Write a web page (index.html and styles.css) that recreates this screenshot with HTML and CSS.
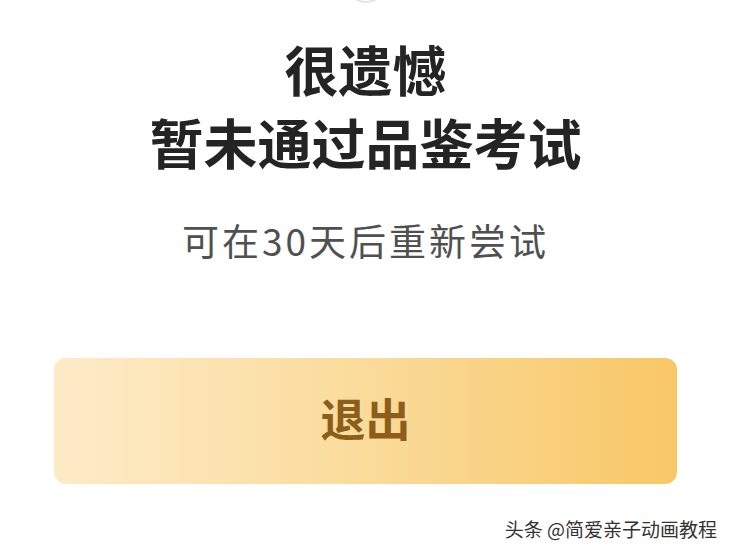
FILE: index.html
```html
<!DOCTYPE html>
<html lang="zh-CN">
<head>
  <meta charset="UTF-8" />
  <meta name="viewport" content="width=device-width, initial-scale=1.0" />
  <title>品鉴考试结果</title>
  <link rel="stylesheet" href="styles.css">
</head>
<body>
  <div class="result">
    <div class="result-icon"></div>

    <h1 class="result-title">
      <span>很遗憾</span>
      <span>暂未通过品鉴考试</span>
    </h1>

    <p class="result-tip">可在30天后重新尝试</p>

    <button class="exit-btn">退出</button>
  </div>

  <div class="watermark">头条 @简爱亲子动画教程</div>
</body>
</html>
```

FILE: styles.css
```css
* {
  box-sizing: border-box;
  margin: 0;
  padding: 0;
}
body {
  font-family: 'Noto Sans CJK SC', 'Noto Sans', sans-serif;
  background: #fff;
  color: #222;
  width: 731px;
  height: 556px;
  overflow: hidden;
  position: relative;
}
.result {
  display: flex;
  flex-direction: column;
  align-items: center;
  padding: 0 54px;
}
/* bottom edge of the status icon, scrolled off the top */
.result-icon {
  width: 44px;
  height: 44px;
  margin-top: -41px;
  border-radius: 50%;
  border: 2px solid #e4e4e4;
}
.result-title {
  display: flex;
  flex-direction: column;
  align-items: center;
  margin-top: 29px;
  font-size: 54px;
  line-height: 73px;
  font-weight: 700;
  color: #242424;
}
.result-tip {
  margin-top: 37px;
  font-size: 37px;
  line-height: 50px;
  letter-spacing: 3px;
  color: #505050;
}
.exit-btn {
  width: 100%;
  height: 126px;
  margin-top: 93px;
  padding-bottom: 8px;
  border: none;
  border-radius: 12px;
  background: linear-gradient(to right, #fdebc8, #fadb9a 50%, #f8c766);
  color: #8d5d1c;
  font-family: inherit;
  font-size: 45px;
  font-weight: 700;
  cursor: pointer;
}
.watermark {
  position: absolute;
  right: 14px;
  bottom: 14px;
  font-size: 19px;
  color: #333;
  text-shadow: 0 0 2px #fff, 0 0 2px #fff;
}
```
